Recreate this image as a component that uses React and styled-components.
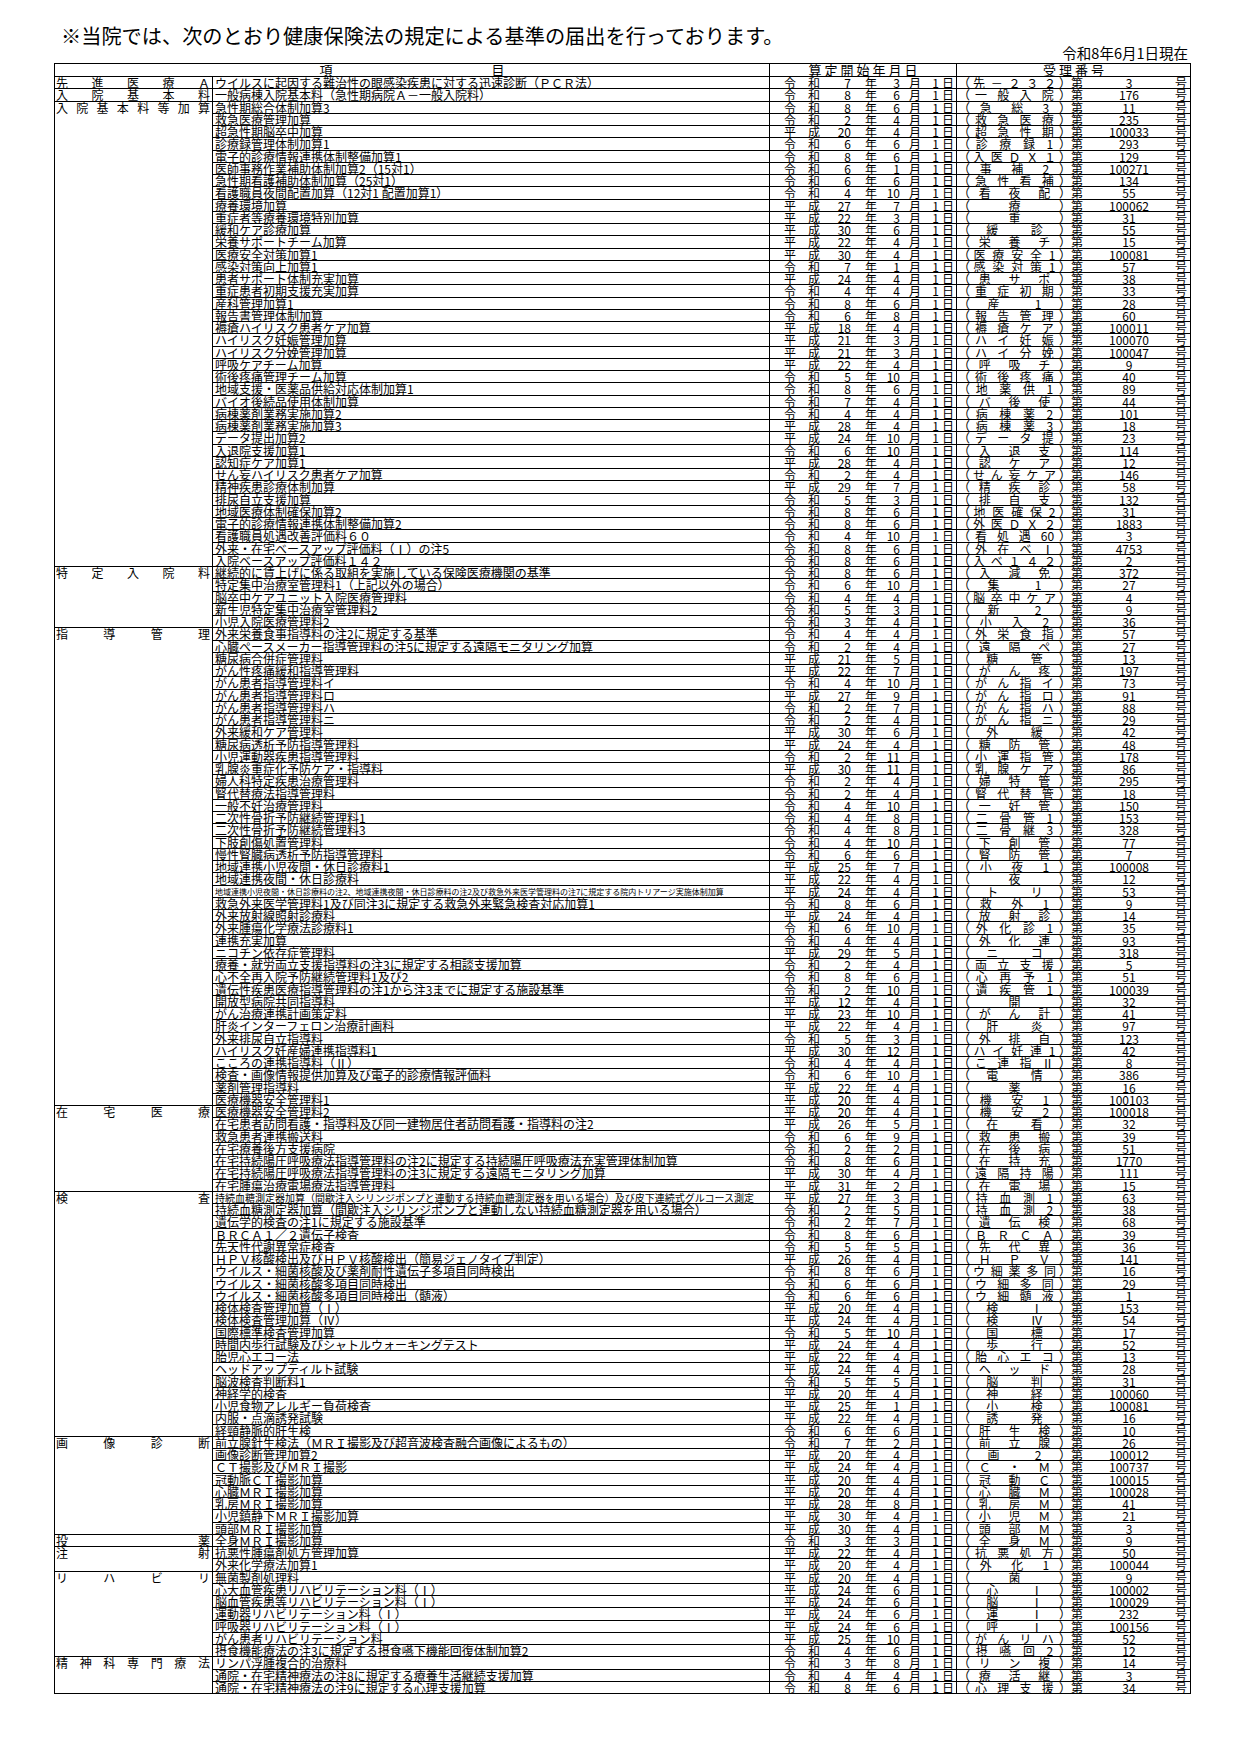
import React from 'react';
import styled, { createGlobalStyle } from 'styled-components';

const GlobalStyle = createGlobalStyle`
  html, body { margin: 0; padding: 0; background: #fff; }
  body { font-family: "Noto Sans CJK JP", "Noto Sans", sans-serif; color: #000; }
`;

const RAW = `
#先進医療Ａ
ウイルスに起因する難治性の眼感染疾患に対する迅速診断（ＰＣＲ法）|R7.3.1|先－２３２|3
#入院基本料
一般病棟入院基本料（急性期病院Ａ－一般入院料）|R8.6.1|一般入院|176
#入院基本料等加算
急性期総合体制加算3|R8.6.1|急総3|11
救急医療管理加算|R2.4.1|救急医療|235
超急性期脳卒中加算|H20.4.1|超急性期|100033
診療録管理体制加算1|R6.6.1|診療録1|293
電子的診療情報連携体制整備加算1|R8.6.1|入医ＤＸ１|129
医師事務作業補助体制加算2（15対1）|R6.1.1|事補2|100271
急性期看護補助体制加算（25対1）|R6.6.1|急性看補|134
看護職員夜間配置加算（12対1 配置加算1）|R4.10.1|看夜配|55
療養環境加算|H27.7.1|療|100062
重症者等療養環境特別加算|H22.3.1|重|31
緩和ケア診療加算|H30.6.1|緩診|55
栄養サポートチーム加算|H22.4.1|栄養チ|15
医療安全対策加算1|H30.4.1|医療安全1|100081
感染対策向上加算1|R7.1.1|感染対策1|57
患者サポート体制充実加算|H24.4.1|患サポ|38
重症患者初期支援充実加算|R4.4.1|重症初期|33
産科管理加算1|R8.6.1|産1|28
報告書管理体制加算|R6.8.1|報告管理|60
褥瘡ハイリスク患者ケア加算|H18.4.1|褥瘡ケア|100011
ハイリスク妊娠管理加算|H21.3.1|ハイ妊娠|100070
ハイリスク分娩管理加算|H21.3.1|ハイ分娩|100047
呼吸ケアチーム加算|H22.4.1|呼吸チ|9
術後疼痛管理チーム加算|R5.10.1|術後疼痛|40
地域支援・医薬品供給対応体制加算1|R8.6.1|地薬供1|89
バイオ後続品使用体制加算|R7.4.1|バ後使|44
病棟薬剤業務実施加算2|R4.4.1|病棟薬2|101
病棟薬剤業務実施加算3|H28.4.1|病棟薬3|18
データ提出加算2|H24.10.1|データ提|23
入退院支援加算1|R6.10.1|入退支|114
認知症ケア加算1|H28.4.1|認ケア|12
せん妄ハイリスク患者ケア加算|R2.4.1|せん妄ケア|146
精神疾患診療体制加算|H29.7.1|精疾診|58
排尿自立支援加算|R5.3.1|排自支|132
地域医療体制確保加算2|R8.6.1|地医確保2|31
電子的診療情報連携体制整備加算2|R8.6.1|外医ＤＸ２|1883
看護職員処遇改善評価料６０|R4.10.1|看処遇60|3
外来・在宅ベースアップ評価料（Ⅰ）の注5|R8.6.1|外在ベⅠ|4753
入院ベースアップ評価料１４２|R8.6.1|入ベ１４２|2
#特定入院料
継続的に賃上げに係る取組を実施している保険医療機関の基準|R8.6.1|入減免|372
特定集中治療室管理料1（上記以外の場合）|R6.10.1|集1|27
脳卒中ケアユニット入院医療管理料|R4.4.1|脳卒中ケア|4
新生児特定集中治療室管理料2|R5.3.1|新2|9
小児入院医療管理料2|R3.4.1|小入2|36
#指導管理
外来栄養食事指導料の注2に規定する基準|R4.4.1|外栄食指|57
心臓ペースメーカー指導管理料の注5に規定する遠隔モニタリング加算|R2.4.1|遠隔ペ|27
糖尿病合併症管理料|H21.5.1|糖管|13
がん性疼痛緩和指導管理料|H22.7.1|がん疼|197
がん患者指導管理料イ|R4.10.1|がん指イ|73
がん患者指導管理料ロ|H27.9.1|がん指ロ|91
がん患者指導管理料ハ|R2.7.1|がん指ハ|88
がん患者指導管理料ニ|R2.4.1|がん指ニ|29
外来緩和ケア管理料|H30.6.1|外緩|42
糖尿病透析予防指導管理料|H24.4.1|糖防管|48
小児運動器疾患指導管理料|R2.11.1|小運指管|178
乳腺炎重症化予防ケア・指導料|H30.11.1|乳腺ケア|86
婦人科特定疾患治療管理料|R2.4.1|婦特管|295
腎代替療法指導管理料|R2.4.1|腎代替管|18
一般不妊治療管理料|R4.10.1|一妊管|150
二次性骨折予防継続管理料1|R4.8.1|二骨管1|153
二次性骨折予防継続管理料3|R4.8.1|二骨継3|328
下肢創傷処置管理料|R4.10.1|下創管|77
慢性腎臓病透析予防指導管理料|R6.6.1|腎防管|7
地域連携小児夜間・休日診療料1|H25.7.1|小夜1|100008
地域連携夜間・休日診療料|H22.4.1|夜|12
地域連携小児夜間・休日診療料の注2、地域連携夜間・休日診療料の注2及び救急外来医学管理料の注7に規定する院内トリアージ実施体制加算|H24.4.1|トリ|53|8
救急外来医学管理料1及び同注3に規定する救急外来緊急検査対応加算1|R8.6.1|救外1|9
外来放射線照射診療料|H24.4.1|放射診|14
外来腫瘍化学療法診療料1|R6.10.1|外化診1|35
連携充実加算|R4.4.1|外化連|93
ニコチン依存症管理料|H29.5.1|ニコ|318
療養・就労両立支援指導料の注3に規定する相談支援加算|R2.4.1|両立支援|5
心不全再入院予防継続管理料1及び2|R8.6.1|心再予1|51
遺伝性疾患医療指導管理料の注1から注3までに規定する施設基準|R2.10.1|遺疾管1|100039
開放型病院共同指導料|H12.4.1|開|32
がん治療連携計画策定料|H23.10.1|がん計|41
肝炎インターフェロン治療計画料|H22.4.1|肝炎|97
外来排尿自立指導料|R5.3.1|外排自|123
ハイリスク妊産婦連携指導料1|H30.12.1|ハイ妊連1|42
こころの連携指導料（Ⅱ）|R4.4.1|こ連指Ⅱ|8
検査・画像情報提供加算及び電子的診療情報評価料|R6.10.1|電情|386
薬剤管理指導料|H22.4.1|薬|16
医療機器安全管理料1|H20.4.1|機安1|100103
#在宅医療
医療機器安全管理料2|H20.4.1|機安2|100018
在宅患者訪問看護・指導料及び同一建物居住者訪問看護・指導料の注2|H26.5.1|在看|32
救急患者連携搬送料|R6.9.1|救患搬|39
在宅療養後方支援病院|R2.2.1|在後病|51
在宅持続陽圧呼吸療法指導管理料の注2に規定する持続陽圧呼吸療法充実管理体制加算|R8.6.1|在持充|1770
在宅持続陽圧呼吸療法指導管理料の注3に規定する遠隔モニタリング加算|H30.4.1|遠隔持陽|111
在宅腫瘍治療電場療法指導管理料|H31.2.1|在電場|15
#検査
持続血糖測定器加算（間歇注入シリンジポンプと連動する持続血糖測定器を用いる場合）及び皮下連続式グルコース測定|H27.3.1|持血測1|63|10
持続血糖測定器加算（間歇注入シリンジポンプと連動しない持続血糖測定器を用いる場合）|R2.5.1|持血測2|38
遺伝学的検査の注1に規定する施設基準|R2.7.1|遺伝検|68
ＢＲＣＡ１／２遺伝子検査|R8.6.1|ＢＲＣＡ|39
先天性代謝異常症検査|R5.5.1|先代異|36
ＨＰＶ核酸検出及びＨＰＶ核酸検出（簡易ジェノタイプ判定）|H26.4.1|ＨＰＶ|141
ウイルス・細菌核酸及び薬剤耐性遺伝子多項目同時検出|R8.6.1|ウ細薬多同|16
ウイルス・細菌核酸多項目同時検出|R6.6.1|ウ細多同|29
ウイルス・細菌核酸多項目同時検出（髄液）|R6.6.1|ウ細髄液|1
検体検査管理加算（Ⅰ）|H20.4.1|検Ⅰ|153
検体検査管理加算（Ⅳ）|H24.4.1|検Ⅳ|54
国際標準検査管理加算|R5.10.1|国標|17
時間内歩行試験及びシャトルウォーキングテスト|H24.4.1|歩行|52
胎児心エコー法|H22.4.1|胎心エコ|13
ヘッドアップティルト試験|H24.4.1|ヘッド|28
脳波検査判断料1|R5.5.1|脳判|31
神経学的検査|H20.4.1|神経|100060
小児食物アレルギー負荷検査|H25.1.1|小検|100081
内服・点滴誘発試験|H22.4.1|誘発|16
経頸静脈的肝生検|R6.6.1|肝生検|10
#画像診断
前立腺針生検法（ＭＲＩ撮影及び超音波検査融合画像によるもの）|R7.2.1|前立腺|26
画像診断管理加算2|H20.4.1|画2|100012
ＣＴ撮影及びＭＲＩ撮影|H24.4.1|Ｃ・Ｍ|100737
冠動脈ＣＴ撮影加算|H20.4.1|冠動Ｃ|100015
心臓ＭＲＩ撮影加算|H20.4.1|心臓Ｍ|100028
乳房ＭＲＩ撮影加算|H28.8.1|乳房Ｍ|41
小児鎮静下ＭＲＩ撮影加算|H30.4.1|小児Ｍ|21
頭部ＭＲＩ撮影加算|H30.4.1|頭部Ｍ|3
#投薬
全身ＭＲＩ撮影加算|R3.3.1|全身Ｍ|9
#注射
抗悪性腫瘍剤処方管理加算|H22.4.1|抗悪処方|50
外来化学療法加算1|H20.4.1|外化1|100044
#リハビリ
無菌製剤処理料|H20.4.1|菌|9
心大血管疾患リハビリテーション料（Ⅰ）|H24.6.1|心Ⅰ|100002
脳血管疾患等リハビリテーション料（Ⅰ）|H24.6.1|脳Ⅰ|100029
運動器リハビリテーション料（Ⅰ）|H24.6.1|運Ⅰ|232
呼吸器リハビリテーション料（Ⅰ）|H24.6.1|呼Ⅰ|100156
がん患者リハビリテーション料|H25.10.1|がんリハ|52
摂食機能療法の注3に規定する摂食嚥下機能回復体制加算2|R4.6.1|摂嚥回2|12
#精神科専門療法
リンパ浮腫複合的治療料|R3.8.1|リン複|14
通院・在宅精神療法の注8に規定する療養生活継続支援加算|R4.4.1|療活継|3
通院・在宅精神療法の注9に規定する心理支援加算|R8.6.1|心理支援|34
`;

const groups = [];
RAW.trim().split('\n').forEach((line) => {
  if (line.startsWith('#')) {
    groups.push({ cat: line.slice(1), rows: [] });
    return;
  }
  const [item, date, code, no, size] = line.split('|');
  const [y, m, d] = date.slice(1).split('.');
  groups[groups.length - 1].rows.push({
    item,
    era: date[0] === 'R' ? ['令', '和'] : ['平', '成'],
    y,
    m,
    d,
    code,
    no,
    size: size ? Number(size) : undefined,
  });
});

const tokenize = (s) => s.match(/[0-9A-Za-z]+|./gu) || [];

const Page = styled.div`
  width: 1241px;
  box-sizing: border-box;
  padding: 25px 0 40px 54px;
`;

const Title = styled.h1`
  margin: 0 0 0 7px;
  font-size: 20.2px;
  font-weight: 400;
  line-height: 22px;
  white-space: nowrap;
`;

const AsOf = styled.div`
  width: 1137px;
  box-sizing: border-box;
  margin-top: -1px;
  padding-right: 3px;
  text-align: right;
  font-size: 14.5px;
  line-height: 14px;
`;

const Table = styled.div`
  display: grid;
  width: 1137px;
  box-sizing: border-box;
  margin-top: 3px;
  grid-template-columns: 157px 556px 186px 233px;
  grid-template-rows: 12px;
  grid-auto-rows: 11.25px;
  gap: 1px;
  padding: 1px;
  background: #000;
`;

const HeadCell = styled.div`
  grid-column: ${(p) => (p.$wide ? '1 / 3' : 'auto')};
  background: #fff;
  display: flex;
  align-items: center;
  justify-content: center;
  gap: ${(p) => (p.$wide ? '159px' : '0')};
  font-size: 13px;
  line-height: 12px;
  letter-spacing: ${(p) => (p.$wide ? '0' : '3px')};
  padding-left: ${(p) => (p.$wide ? '0' : '3px')};
`;

const CatCell = styled.div`
  grid-column: 1;
  grid-row: span ${(p) => p.$span};
  background: #fff;
  display: flex;
  justify-content: space-between;
  align-items: flex-start;
  padding: 0 2px 0 1px;
  font-size: 12px;
  line-height: 11.25px;
`;

const ItemCell = styled.div`
  grid-column: 2;
  background: #fff;
  display: flex;
  align-items: center;
  padding-left: 2px;
  white-space: nowrap;
  font-size: ${(p) => p.$size || 12}px;
  line-height: 11px;
`;

const DateCell = styled.div`
  grid-column: 3;
  background: #fff;
  display: grid;
  grid-template-columns: 12px 24px 31px 26px 23px 21px 18px 15px;
  justify-items: end;
  align-items: center;
  padding-left: 14px;
  font-size: 12px;
  line-height: 11px;
`;

const NumCell = styled.div`
  grid-column: 4;
  background: #fff;
  display: grid;
  grid-template-columns: 12px 89px 12px 12px 92px 12px;
  align-items: center;
  padding-left: 1px;
  font-size: 12px;
  line-height: 11px;
`;

const CodeBody = styled.span`
  display: flex;
  justify-content: space-around;
`;

const NumText = styled.span`
  text-align: center;
`;

const Glyph = styled.span`
  display: block;
`;

export default function App() {
  return (
    <>
      <GlobalStyle />
      <Page>
        <Title>※当院では、次のとおり健康保険法の規定による基準の届出を行っております。</Title>
        <AsOf>令和8年6月1日現在</AsOf>
        <Table>
          <HeadCell $wide>
            <span>項</span>
            <span>目</span>
          </HeadCell>
          <HeadCell>算定開始年月日</HeadCell>
          <HeadCell>受理番号</HeadCell>
          {groups.map((g, gi) => (
            <React.Fragment key={gi}>
              <CatCell $span={g.rows.length}>
                {Array.from(g.cat).map((c, i) => (
                  <span key={i}>{c}</span>
                ))}
              </CatCell>
              {g.rows.map((r, ri) => (
                <React.Fragment key={ri}>
                  <ItemCell $size={r.size}>{r.item}</ItemCell>
                  <DateCell>
                    <span>{r.era[0]}</span>
                    <span>{r.era[1]}</span>
                    <span>{r.y}</span>
                    <span>年</span>
                    <span>{r.m}</span>
                    <span>月</span>
                    <span>{r.d}</span>
                    <span>日</span>
                  </DateCell>
                  <NumCell>
                    <Glyph>（</Glyph>
                    <CodeBody>
                      {tokenize(r.code).map((t, ti) => (
                        <span key={ti}>{t}</span>
                      ))}
                    </CodeBody>
                    <Glyph>）</Glyph>
                    <Glyph>第</Glyph>
                    <NumText>{r.no}</NumText>
                    <Glyph>号</Glyph>
                  </NumCell>
                </React.Fragment>
              ))}
            </React.Fragment>
          ))}
        </Table>
      </Page>
    </>
  );
}
